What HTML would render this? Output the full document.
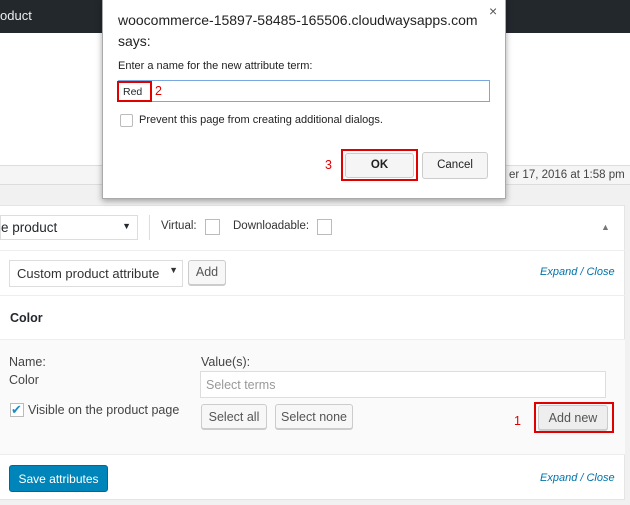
<!DOCTYPE html><html><head><style>
*{box-sizing:border-box;margin:0;padding:0}
body{width:630px;height:505px;overflow:hidden;background:#f1f1f1;font-family:"Liberation Sans",sans-serif;font-size:12.5px;color:#23282d;position:relative}
.a{position:absolute}
.btn{position:absolute;border:1px solid #ccc;background:#f7f7f7;border-radius:3px;box-shadow:0 1px 0 #ccc;font-size:12.5px;color:#555;text-align:center}
.red{border:2px solid #e00000}
.lnk{color:#0073aa;font-style:italic;font-size:11px}
</style></head><body>
<div class="a" style="left:0;top:0;width:630px;height:33px;background:#23282d;color:#eee;font-size:13px;padding:8px 0 0 0">oduct</div>
<div class="a" style="left:0;top:33px;width:630px;height:132px;background:#fff"></div>
<div class="a" style="left:0;top:165px;width:630px;height:20px;background:#f5f5f5;border-top:1px solid #ddd;border-bottom:1px solid #ddd"></div>
<div class="a" style="left:509px;top:169px;font-size:11.5px;color:#444">er 17, 2016 at 1:58 pm</div>
<div class="a" style="left:0;top:205px;width:625px;height:295px;background:#fff;border:1px solid #e5e5e5;border-left:none"></div>
<div class="a" style="left:0;top:215px;width:138px;height:25px;border:1px solid #ddd;font-size:13.5px;padding:4px 0 0 0">e product<span style="position:absolute;right:6px;top:5px;font-size:9px">▼</span></div>
<div class="a" style="left:149px;top:215px;height:25px;border-left:1px solid #ddd"></div>
<div class="a" style="left:161px;top:220px;font-size:11.5px;color:#333">Virtual:</div>
<div class="a" style="left:205px;top:219px;width:15px;height:16px;border:1px solid #bbb"></div>
<div class="a" style="left:233px;top:220px;font-size:11.5px;color:#333">Downloadable:</div>
<div class="a" style="left:317px;top:219px;width:15px;height:16px;border:1px solid #bbb"></div>
<div class="a" style="left:601px;top:222px;font-size:9px;color:#777">▲</div>
<div class="a" style="left:0;top:250px;width:625px;border-top:1px solid #eee"></div>
<div class="a" style="left:9px;top:260px;width:174px;height:27px;border:1px solid #ddd;font-size:13px;color:#333;padding:5px 0 0 7px">Custom product attribute<span style="position:absolute;right:4px;top:4px;font-size:9px">▼</span></div>
<div class="btn" style="left:188px;top:260px;width:38px;height:25px;padding-top:4px">Add</div>
<div class="a lnk" style="left:540px;top:266px">Expand / Close</div>
<div class="a" style="left:0;top:295px;width:625px;border-top:1px solid #eee"></div>
<div class="a" style="left:10px;top:311px;font-weight:bold;font-size:12.5px">Color</div>
<div class="a" style="left:0;top:339px;width:625px;height:116px;background:#fafafa;border-top:1px solid #eee;border-bottom:1px solid #eee"></div>
<div class="a" style="left:9px;top:355px;color:#444">Name:</div>
<div class="a" style="left:9px;top:373px;color:#444">Color</div>
<div class="a" style="left:10px;top:403px;width:14px;height:14px;border:1px solid #bbb;background:#fff;color:#1e8cbe;font-size:13px;line-height:12px">✔</div>
<div class="a" style="left:28px;top:403px;color:#444">Visible on the product page</div>
<div class="a" style="left:201px;top:355px;color:#444">Value(s):</div>
<div class="a" style="left:200px;top:371px;width:406px;height:27px;border:1px solid #ddd;background:#fff;color:#999;padding:6px 0 0 5px">Select terms</div>
<div class="btn" style="left:201px;top:404px;width:66px;height:25px;padding-top:5px">Select all</div>
<div class="btn" style="left:275px;top:404px;width:78px;height:25px;padding-top:5px">Select none</div>
<div class="a" style="left:514px;top:414px;color:#e00000;font-size:12.5px">1</div>
<div class="a red" style="left:534px;top:402px;width:80px;height:31px"></div>
<div class="btn" style="left:538px;top:405px;width:70px;height:25px;padding-top:5px;background:#eee">Add new</div>
<div class="a" style="left:9px;top:465px;width:99px;height:27px;background:#0085ba;border-radius:3px;color:#fff;text-align:center;padding-top:6px;border:1px solid #006799;font-size:12px">Save attributes</div>
<div class="a lnk" style="left:540px;top:472px">Expand / Close</div>
<!-- dialog -->
<div class="a" style="left:102px;top:-2px;width:404px;height:201px;background:#fff;border:1px solid #aaa;box-shadow:0 2px 6px rgba(0,0,0,.35)"></div>
<div class="a" style="left:489px;top:3px;font-size:14px;color:#555">×</div>
<div class="a" style="left:118px;top:10px;font-size:14px;color:#222;line-height:21px;white-space:nowrap">woocommerce-15897-58485-165506.cloudwaysapps.com<br>says:</div>
<div class="a" style="left:118px;top:60px;font-size:11px;color:#222">Enter a name for the new attribute term:</div>
<div class="a" style="left:118px;top:80px;width:372px;height:22px;border:1px solid #7aa7e0"></div>
<div class="a red" style="left:117px;top:81px;width:35px;height:21px;font-size:10.5px;padding:3px 0 0 4px">Red</div>
<div class="a" style="left:155px;top:84px;color:#e00000;font-size:12.5px">2</div>
<div class="a" style="left:120px;top:114px;width:13px;height:13px;border:1px solid #bbb;border-radius:2px"></div>
<div class="a" style="left:139px;top:114px;font-size:11px;color:#222">Prevent this page from creating additional dialogs.</div>
<div class="a" style="left:325px;top:158px;color:#e00000;font-size:12.5px">3</div>
<div class="a red" style="left:341px;top:149px;width:77px;height:32px"></div>
<div class="btn" style="left:345px;top:153px;width:69px;height:25px;padding-top:5px;font-weight:bold;color:#222;font-size:11.5px;background:#f5f5f5;box-shadow:none">OK</div>
<div class="btn" style="left:422px;top:152px;width:66px;height:27px;padding-top:6px;color:#222;font-size:11.5px;background:#f5f5f5;box-shadow:none">Cancel</div>
</body></html>
